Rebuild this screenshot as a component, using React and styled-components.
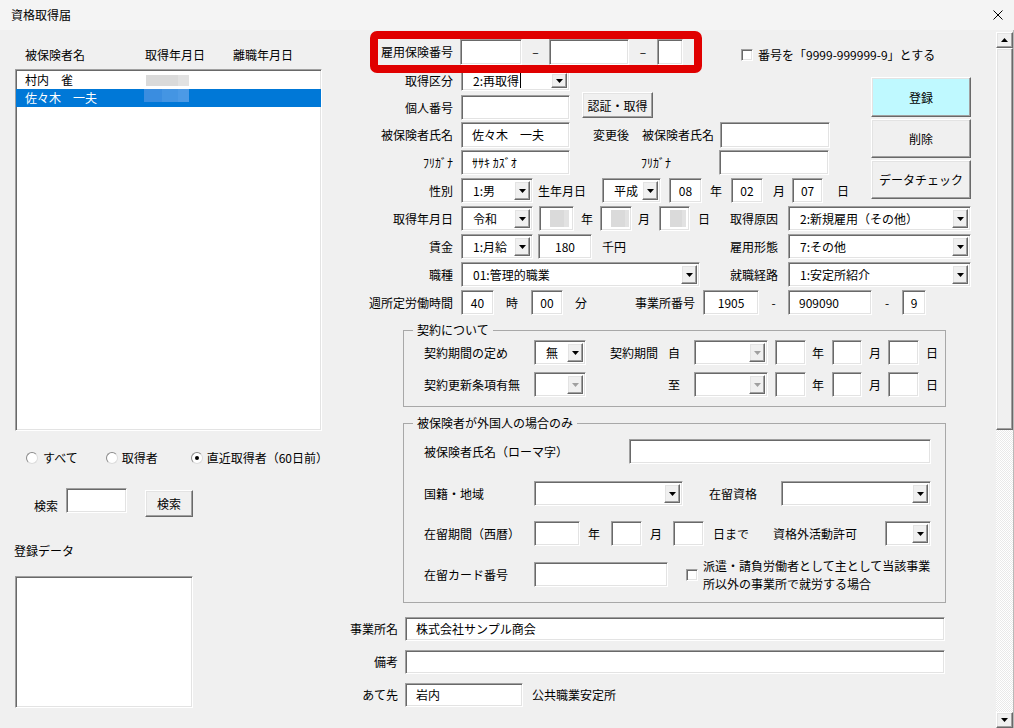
import React from "react";
import styled, { createGlobalStyle, css } from "styled-components";

const GlobalStyle = createGlobalStyle`
  * { box-sizing: border-box; }
  html, body {
    margin: 0;
    padding: 0;
    background: #f0f0f0;
  }
  body {
    font-family: "Noto Sans CJK JP", "Noto Sans", sans-serif;
    font-size: 12px;
    color: #000;
  }
`;

// classic 3D edges used by every control on the form
const sunken = css`
  background: #fff;
  border: 1px solid;
  border-color: #a0a0a0 #fff #fff #a0a0a0;
  box-shadow: inset 1px 1px 0 #696969, inset -1px -1px 0 #e3e3e3;
`;

const raised = css`
  border: 1px solid;
  border-color: #fff #696969 #696969 #fff;
  box-shadow: inset -1px -1px 0 #a0a0a0, inset 1px 1px 0 #e3e3e3;
`;

const Window = styled.div`
  width: 1014px;
  height: 728px;
  display: flex;
  flex-direction: column;
  overflow: hidden;
  background: #f0f0f0;
`;

const TitleBar = styled.div`
  height: 30px;
  flex: none;
  display: flex;
  align-items: center;
  justify-content: space-between;
  padding: 0 11px 0 11px;
  background: #f4f4f4;
`;

const Title = styled.span`
  font-size: 12px;
  line-height: 16px;
`;

const Body = styled.div`
  flex: 1;
  min-height: 0;
  display: flex;
`;

const LeftPane = styled.div`
  width: 340px;
  flex: none;
  display: flex;
  flex-direction: column;
  align-items: flex-start;
  padding: 17px 0 0 15px;
`;

const RightPane = styled.div`
  flex: 1;
  min-width: 0;
  display: flex;
  flex-direction: column;
  padding: 9px 25px 0 0;
`;

const Row = styled.div`
  display: flex;
  align-items: ${({ $top }) => ($top ? "flex-start" : "center")};
  flex: none;
  height: ${({ $h }) => $h || 25}px;
  margin-top: ${({ $mt }) => $mt || 0}px;
`;

const Label = styled.span`
  flex: none;
  font-size: 12px;
  line-height: ${({ $lh }) => $lh || 16}px;
  white-space: nowrap;
  width: ${({ $w }) => ($w ? `${$w}px` : "auto")};
  margin-left: ${({ $ml }) => $ml || 0}px;
  margin-top: ${({ $mt }) => $mt || 0}px;
  text-align: ${({ $align }) => $align || "left"};
`;

const TextBox = styled.div`
  ${sunken};
  flex: none;
  width: ${({ $w }) => $w}px;
  height: ${({ $h }) => $h || 25}px;
  margin-left: ${({ $ml }) => $ml || 0}px;
  margin-top: ${({ $mt }) => $mt || 0}px;
  display: flex;
  align-items: center;
  justify-content: ${({ $center }) => ($center ? "center" : "flex-start")};
  padding: 0 ${({ $center }) => ($center ? 0 : 10)}px;
  font-size: 12px;
  line-height: 16px;
  white-space: nowrap;
  overflow: hidden;
`;

const ComboBox = styled.div`
  ${sunken};
  flex: none;
  width: ${({ $w }) => $w}px;
  height: ${({ $h }) => $h || 25}px;
  margin-left: ${({ $ml }) => $ml || 0}px;
  display: flex;
  align-items: stretch;
  padding: 2px;
`;

const ComboText = styled.span`
  flex: 1;
  display: flex;
  align-items: center;
  padding-left: 9px;
  white-space: nowrap;
  overflow: hidden;
  line-height: 16px;
`;

const DropButton = styled.span`
  width: 16px;
  flex: none;
  background: #f0f0f0;
  ${raised};
  display: flex;
  align-items: center;
  justify-content: center;
`;

const Caret = styled.span`
  width: 1px;
  height: 15px;
  background: #000;
  margin-left: 1px;
`;

const PushButton = styled.button`
  ${raised};
  flex: none;
  font: inherit;
  font-size: 12px;
  color: #000;
  padding: 0;
  background: ${({ $bg }) => $bg || "#f0f0f0"};
  width: ${({ $w }) => $w}px;
  height: ${({ $h }) => $h}px;
  margin-left: ${({ $ml }) => $ml || 0}px;
  margin-top: ${({ $mt }) => $mt || 0}px;
`;

const CheckBox = styled.span`
  ${sunken};
  flex: none;
  width: 12px;
  height: 12px;
  margin-left: ${({ $ml }) => $ml || 0}px;
`;

const Radio = styled.span`
  flex: none;
  width: 12px;
  height: 12px;
  border-radius: 50%;
  background: #fff;
  border: 1px solid;
  border-color: #8a8a8a #dcdcdc #dcdcdc #8a8a8a;
  margin-left: ${({ $ml }) => $ml || 0}px;
  display: flex;
  align-items: center;
  justify-content: center;

  &::after {
    content: "";
    display: ${({ $checked }) => ($checked ? "block" : "none")};
    width: 4px;
    height: 4px;
    border-radius: 50%;
    background: #000;
  }
`;

// greyed-out placeholder blocks where personal dates are hidden
const Mask = styled.span`
  flex: none;
  width: ${({ $w }) => $w}px;
  height: ${({ $h }) => $h}px;
  margin-left: ${({ $ml }) => $ml || 0}px;
  align-self: ${({ $top }) => ($top ? "flex-start" : "center")};
  background: ${({ $blue }) =>
    $blue
      ? "linear-gradient(90deg, #3a8de0 0 40%, #4495e3 40% 75%, #4c9ae6 75%)"
      : "linear-gradient(90deg, #dadada 0 75%, #e2e2e2 75%)"};
`;

const HeaderRow = styled.div`
  display: flex;
  height: 16px;
  flex: none;
`;

const ListBox = styled.div`
  ${sunken};
  width: 307px;
  height: 362px;
  margin-top: 6px;
  padding-top: 1px;
  display: flex;
  flex-direction: column;
`;

const ListItem = styled.div`
  height: 18px;
  flex: none;
  display: flex;
  align-items: center;
  padding-left: 9px;
  background: ${({ $selected }) => ($selected ? "#0078d7" : "transparent")};
  color: ${({ $selected }) => ($selected ? "#fff" : "#000")};
  line-height: 16px;
`;

const NameCell = styled.span`
  width: 121px;
  flex: none;
`;

const Highlight = styled.div`
  position: relative;
  display: flex;
  align-items: center;
  height: 26px;
  margin-left: 38px;
  padding-right: 11px;

  &::after {
    content: "";
    position: absolute;
    inset: -8px;
    border: 8px solid #e00000;
    border-radius: 7px;
    pointer-events: none;
  }
`;

const CheckOption = styled.div`
  display: flex;
  align-items: center;
  margin-left: ${({ $ml }) => $ml || 0}px;
  margin-top: ${({ $mt }) => $mt || 0}px;
`;

const UpperGrid = styled.div`
  display: flex;
  margin-top: 5px;
`;

const FieldColumn = styled.div`
  flex: 1;
  display: flex;
  flex-direction: column;
`;

const ActionColumn = styled.div`
  width: 100px;
  flex: none;
  display: flex;
  flex-direction: column;
  gap: 2px;
  padding-top: 7px;
`;

const Trailing = styled.div`
  margin-left: auto;
  display: flex;
  align-items: center;
`;

const GroupBox = styled.div`
  position: relative;
  flex: none;
  width: 543px;
  margin-left: 63px;
  margin-top: ${({ $mt }) => $mt}px;
  border: 1px solid #a8a8a8;
  padding: ${({ $pad }) => $pad}px 0 ${({ $pad }) => $pad}px 20px;
  display: flex;
  flex-direction: column;
`;

const Caption = styled.span`
  position: absolute;
  top: -9px;
  left: 9px;
  padding: 0 4px;
  background: #f0f0f0;
  line-height: 16px;
`;

const ScrollBar = styled.div`
  width: 18px;
  flex: none;
  display: flex;
  flex-direction: column;
  padding-top: 2px;
  border-right: 1px solid #b9b9b9;
`;

const ScrollButton = styled.div`
  height: 16px;
  flex: none;
  background: #f0f0f0;
  ${raised};
  display: flex;
  align-items: center;
  justify-content: center;
`;

const ScrollThumb = styled.div`
  height: 382px;
  flex: none;
  background: #f0f0f0;
  ${raised};
`;

const ScrollTrack = styled.div`
  flex: 1;
  background-image: repeating-conic-gradient(#fff 0 25%, #e9e9e9 0 50%);
  background-size: 2px 2px;
`;

const Arrow = ({ color = "#000", up }) => (
  <svg width="7" height="4" viewBox="0 0 7 4">
    <path d={up ? "M0 4H7L3.5 0Z" : "M0 0H7L3.5 4Z"} fill={color} />
  </svg>
);

const CloseIcon = () => (
  <svg width="10" height="10" viewBox="0 0 10 10">
    <path d="M0.5 0.5L9.5 9.5M9.5 0.5L0.5 9.5" stroke="#000" strokeWidth="1" />
  </svg>
);

const Combo = ({ w, h, ml, value, disabled, caret }) => (
  <ComboBox $w={w} $h={h} $ml={ml}>
    <ComboText>
      {value}
      {caret && <Caret />}
    </ComboText>
    <DropButton>
      <Arrow color={disabled ? "#a0a0a0" : "#000"} />
    </DropButton>
  </ComboBox>
);

// 契約期間: era combo + 年/月/日 boxes
const PeriodFields = () => (
  <>
    <Combo w={74} ml={14} disabled />
    <TextBox $w={31} $ml={7} />
    <Label $ml={6}>年</Label>
    <TextBox $w={30} $ml={8} />
    <Label $ml={7}>月</Label>
    <TextBox $w={31} $ml={7} />
    <Label $ml={7}>日</Label>
  </>
);

export default function App() {
  return (
    <>
      <GlobalStyle />
      <Window>
        <TitleBar>
          <Title>資格取得届</Title>
          <CloseIcon />
        </TitleBar>
        <Body>
          <LeftPane>
            <HeaderRow>
              <Label $w={120} $ml={10}>被保険者名</Label>
              <Label $w={88}>取得年月日</Label>
              <Label>離職年月日</Label>
            </HeaderRow>
            <ListBox>
              <ListItem>
                <NameCell>村内　雀</NameCell>
                <Mask $w={43} $h={11} />
              </ListItem>
              <ListItem $selected>
                <NameCell>佐々木　一夫</NameCell>
                <Mask $w={45} $h={13} $ml={-2} $top $blue />
              </ListItem>
            </ListBox>

            <Row $h={16} $mt={19}>
              <Radio $ml={11} />
              <Label $ml={5}>すべて</Label>
              <Radio $ml={28} />
              <Label $ml={4}>取得者</Label>
              <Radio $ml={33} $checked />
              <Label $ml={4}>直近取得者（60日前）</Label>
            </Row>

            <Row $h={29} $mt={22} $top>
              <Label $ml={19} $mt={10}>検索</Label>
              <TextBox $w={61} $ml={8} />
              <PushButton $w={48} $h={27} $ml={18} $mt={2}>検索</PushButton>
            </Row>

            <Label $ml={-1} $mt={26}>登録データ</Label>
            <TextBox $w={178} $h={132} $mt={17} />
          </LeftPane>

          <RightPane>
            <Row $h={26}>
              <Highlight>
                <Label $w={75} $align="right">雇用保険番号</Label>
                <TextBox $w={62} $h={26} $ml={7} />
                <Label $w={27} $align="center">–</Label>
                <TextBox $w={80} $h={26} />
                <Label $w={28} $align="center">–</Label>
                <TextBox $w={26} $h={26} />
              </Highlight>
              <CheckOption $ml={47} $mt={6}>
                <CheckBox />
                <Label $ml={5}>番号を「9999-999999-9」とする</Label>
              </CheckOption>
            </Row>

            <UpperGrid>
              <FieldColumn>
                <Row $h={21}>
                  <Label $w={113} $align="right">取得区分</Label>
                  <Combo w={109} h={21} ml={8} value="2:再取得" caret />
                </Row>
                <Row $mt={4}>
                  <Label $w={113} $align="right">個人番号</Label>
                  <TextBox $w={109} $ml={8} />
                  <PushButton $w={71} $h={26} $ml={12} $mt={-5}>認証・取得</PushButton>
                </Row>
                <Row $h={26} $mt={2}>
                  <Label $w={113} $align="right">被保険者氏名</Label>
                  <TextBox $w={109} $h={26} $ml={8}>佐々木　一夫</TextBox>
                  <Label $ml={23}>変更後</Label>
                  <Label $w={72} $ml={13}>被保険者氏名</Label>
                  <TextBox $w={110} $h={26} $ml={6} />
                </Row>
                <Row $mt={2}>
                  <Label $w={113} $align="right">ﾌﾘｶﾞﾅ</Label>
                  <TextBox $w={109} $ml={8}>ｻｻｷ ｶｽﾞｵ</TextBox>
                  <Label $w={78} $ml={71}>ﾌﾘｶﾞﾅ</Label>
                  <TextBox $w={110} />
                </Row>
                <Row $mt={3}>
                  <Label $w={113} $align="right">性別</Label>
                  <Combo w={72} ml={8} value="1:男" />
                  <Label $ml={5}>生年月日</Label>
                  <Combo w={59} ml={16} value="平成" />
                  <TextBox $w={33} $ml={8} $center>08</TextBox>
                  <Label $ml={8}>年</Label>
                  <TextBox $w={32} $ml={9} $center>02</TextBox>
                  <Label $ml={10}>月</Label>
                  <TextBox $w={31} $ml={7} $center>07</TextBox>
                  <Label $ml={14}>日</Label>
                </Row>
              </FieldColumn>
              <ActionColumn>
                <PushButton $w={100} $h={40} $bg="#bff9ff">登録</PushButton>
                <PushButton $w={100} $h={39}>削除</PushButton>
                <PushButton $w={100} $h={39}>データチェック</PushButton>
              </ActionColumn>
            </UpperGrid>

            <Row $mt={3}>
              <Label $w={113} $align="right">取得年月日</Label>
              <Combo w={72} ml={8} value="令和" />
              <TextBox $w={35} $ml={6}>
                <Mask $w={19} $h={17} />
              </TextBox>
              <Label $ml={7}>年</Label>
              <TextBox $w={32} $ml={7}>
                <Mask $w={18} $h={17} />
              </TextBox>
              <Label $ml={6}>月</Label>
              <TextBox $w={31} $ml={9}>
                <Mask $w={16} $h={17} />
              </TextBox>
              <Label $ml={8}>日</Label>
              <Trailing>
                <Label $w={60} $align="right">取得原因</Label>
                <Combo w={183} ml={10} value="2:新規雇用（その他）" />
              </Trailing>
            </Row>
            <Row $mt={3}>
              <Label $w={113} $align="right">賃金</Label>
              <Combo w={72} ml={8} value="1:月給" />
              <TextBox $w={54} $ml={5} $center>180</TextBox>
              <Label $ml={10}>千円</Label>
              <Trailing>
                <Label $w={60} $align="right">雇用形態</Label>
                <Combo w={183} ml={10} value="7:その他" />
              </Trailing>
            </Row>
            <Row $mt={3}>
              <Label $w={113} $align="right">職種</Label>
              <Combo w={239} ml={8} value="01:管理的職業" />
              <Trailing>
                <Label $w={60} $align="right">就職経路</Label>
                <Combo w={183} ml={10} value="1:安定所紹介" />
              </Trailing>
            </Row>
            <Row $mt={3}>
              <Label $w={113} $align="right">週所定労働時間</Label>
              <TextBox $w={33} $ml={8} $center>40</TextBox>
              <Label $ml={12}>時</Label>
              <TextBox $w={32} $ml={13} $center>00</TextBox>
              <Label $ml={12}>分</Label>
              <Label $ml={48}>事業所番号</Label>
              <TextBox $w={56} $ml={8} $center>1905</TextBox>
              <Label $w={29} $align="center">-</Label>
              <TextBox $w={84}>909090</TextBox>
              <Label $w={30} $align="center">-</Label>
              <TextBox $w={24} $center>9</TextBox>
            </Row>

            <GroupBox $mt={15} $pad={9}>
              <Caption>契約について</Caption>
              <Row>
                <Label $w={110}>契約期間の定め</Label>
                <Combo w={52} value="無" />
                <Label $ml={24}>契約期間</Label>
                <Label $ml={10}>自</Label>
                <PeriodFields />
              </Row>
              <Row $mt={7}>
                <Label $w={110}>契約更新条項有無</Label>
                <Combo w={52} disabled />
                <Label $ml={82}>至</Label>
                <PeriodFields />
              </Row>
            </GroupBox>

            <GroupBox $mt={16} $pad={15}>
              <Caption>被保険者が外国人の場合のみ</Caption>
              <Row>
                <Label $w={205}>被保険者氏名（ローマ字）</Label>
                <TextBox $w={302} />
              </Row>
              <Row $mt={17}>
                <Label $w={110}>国籍・地域</Label>
                <Combo w={149} />
                <Label $w={72} $ml={26}>在留資格</Label>
                <Combo w={150} />
              </Row>
              <Row $mt={15}>
                <Label $w={110}>在留期間（西暦）</Label>
                <TextBox $w={46} />
                <Label $ml={8}>年</Label>
                <TextBox $w={31} $ml={11} />
                <Label $ml={8}>月</Label>
                <TextBox $w={31} $ml={11} />
                <Label $ml={9}>日まで</Label>
                <Label $ml={24}>資格外活動許可</Label>
                <Combo w={46} ml={28} />
              </Row>
              <Row $mt={16}>
                <Label $w={110}>在留カード番号</Label>
                <TextBox $w={134} />
                <CheckBox $ml={18} />
                <Label $ml={5} $lh={18}>
                  派遣・請負労働者として主として当該事業
                  <br />
                  所以外の事業所で就労する場合
                </Label>
              </Row>
            </GroupBox>

            <Row $h={24} $mt={14}>
              <Label $w={58} $align="right">事業所名</Label>
              <TextBox $w={540} $h={24} $ml={7}>株式会社サンプル商会</TextBox>
            </Row>
            <Row $h={24} $mt={9}>
              <Label $w={58} $align="right">備考</Label>
              <TextBox $w={540} $h={24} $ml={7} />
            </Row>
            <Row $h={24} $mt={9}>
              <Label $w={58} $align="right">あて先</Label>
              <TextBox $w={118} $h={24} $ml={7}>岩内</TextBox>
              <Label $ml={9}>公共職業安定所</Label>
            </Row>
          </RightPane>

          <ScrollBar>
            <ScrollButton>
              <Arrow up />
            </ScrollButton>
            <ScrollThumb />
            <ScrollTrack />
            <ScrollButton>
              <Arrow />
            </ScrollButton>
          </ScrollBar>
        </Body>
      </Window>
    </>
  );
}
